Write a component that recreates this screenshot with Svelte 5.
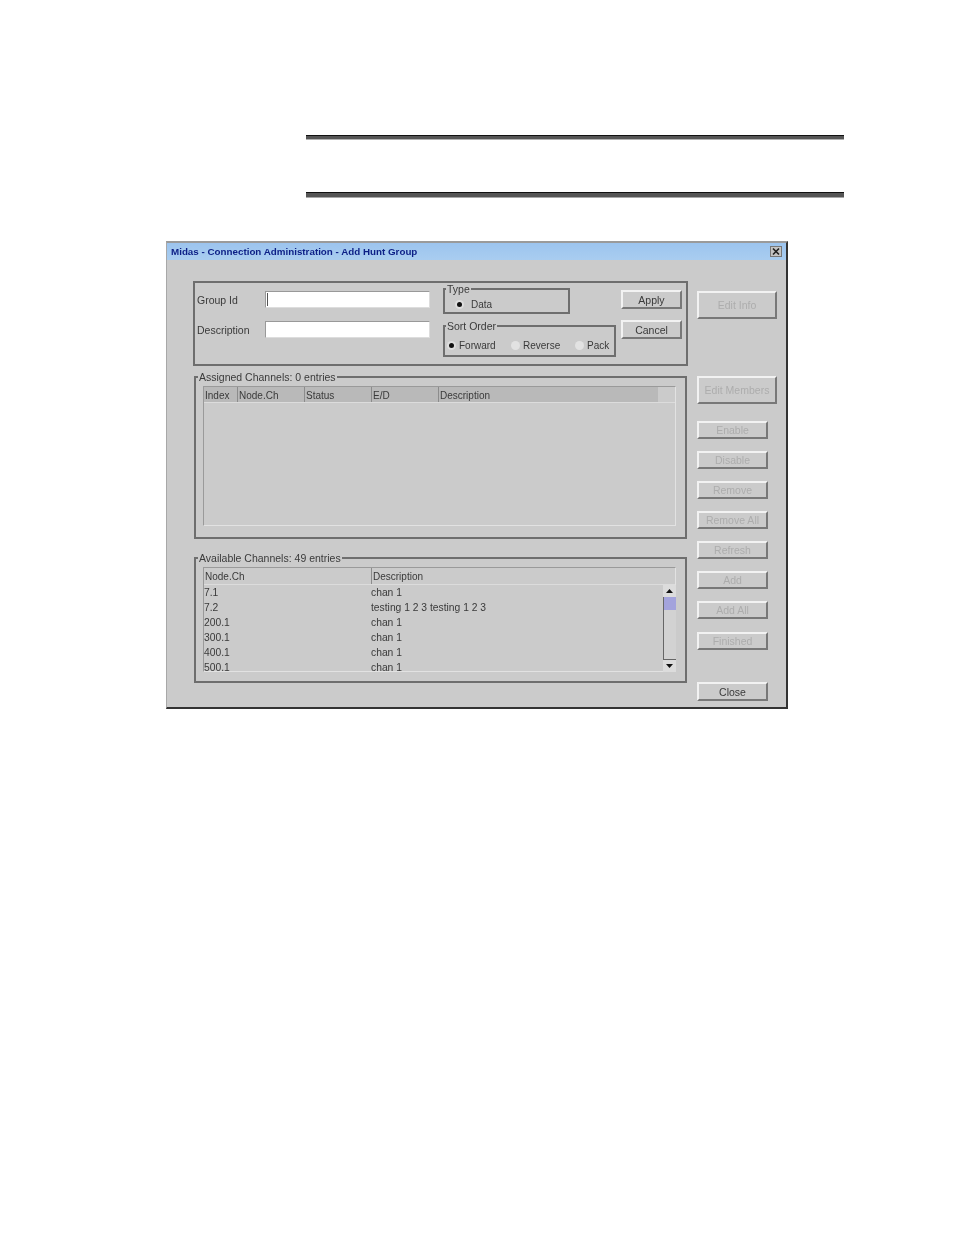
<script lang="ts">
  const assignedCols = [
    { name: "Index", width: 33 },
    { name: "Node.Ch", width: 67 },
    { name: "Status", width: 67 },
    { name: "E/D", width: 67 },
    { name: "Description", width: 221 },
  ];

  const channels = [
    { node: "7.1", desc: "chan 1" },
    { node: "7.2", desc: "testing 1 2 3 testing 1 2 3" },
    { node: "200.1", desc: "chan 1" },
    { node: "300.1", desc: "chan 1" },
    { node: "400.1", desc: "chan 1" },
    { node: "500.1", desc: "chan 1" },
  ];

  const actions = [
    { name: "Enable", top: 17 },
    { name: "Disable", top: 12 },
    { name: "Remove", top: 12 },
    { name: "Remove All", top: 12 },
    { name: "Refresh", top: 12 },
    { name: "Add", top: 12 },
    { name: "Add All", top: 12 },
    { name: "Finished", top: 13 },
  ];

  const sortOrders = [
    { name: "Forward", on: true },
    { name: "Reverse", on: false },
    { name: "Pack", on: false },
  ];
</script>

<div class="page">
  <div class="note">
    <div class="rule"></div>
    <div class="rule second"></div>
  </div>

  <div class="window">
    <div class="titlebar">
      <span>Midas - Connection Administration - Add Hunt Group</span>
      <svg class="close-x" width="12" height="11" viewBox="0 0 12 11">
        <rect x="0.5" y="0.5" width="11" height="10" fill="#c4c4c4" stroke="#777" />
        <path d="M3 2.5 L9 8.5 M9 2.5 L3 8.5" stroke="#222" stroke-width="1.7" />
      </svg>
    </div>

    <div class="body">
      <div class="main">
        <div class="top-panel">
          <div class="fields">
            <div class="field">
              <span class="field-label">Group Id</span>
              <div class="input"><i class="caret"></i></div>
            </div>
            <div class="field">
              <span class="field-label">Description</span>
              <div class="input"></div>
            </div>
          </div>

          <div class="options">
            <fieldset class="group type-group">
              <legend>Type</legend>
              <div class="radio-row type-row">
                <span class="radio on"></span>
                <span>Data</span>
              </div>
            </fieldset>
            <fieldset class="group sort-group">
              <legend>Sort Order</legend>
              <div class="radio-row">
                {#each sortOrders as opt}
                  <div class="radio-opt">
                    <span class="radio" class:on={opt.on}></span>
                    <span>{opt.name}</span>
                  </div>
                {/each}
              </div>
            </fieldset>
          </div>

          <div class="form-buttons">
            <div class="btn apply">Apply</div>
            <div class="btn cancel">Cancel</div>
          </div>
        </div>

        <fieldset class="group assigned">
          <legend>Assigned Channels: 0 entries</legend>
          <div class="table assigned-table">
            <div class="thead">
              {#each assignedCols as col}
                <div class="th" style="width: {col.width}px">{col.name}</div>
              {/each}
            </div>
          </div>
        </fieldset>

        <fieldset class="group available">
          <legend>Available Channels: 49 entries</legend>
          <div class="table available-table">
            <div class="thead light">
              <div class="th node-col">Node.Ch</div>
              <div class="th">Description</div>
            </div>
            <div class="list">
              <div class="rows">
                {#each channels as ch}
                  <div class="row">
                    <span class="node-col">{ch.node}</span>
                    <span>{ch.desc}</span>
                  </div>
                {/each}
              </div>
              <div class="scrollbar">
                <div class="arrow">
                  <svg width="9" height="6" viewBox="0 0 9 6"><path d="M4.5 1 L8 5 H1 Z" fill="#111" /></svg>
                </div>
                <div class="track"><div class="thumb"></div></div>
                <div class="arrow">
                  <svg width="9" height="6" viewBox="0 0 9 6"><path d="M1 1 H8 L4.5 5 Z" fill="#111" /></svg>
                </div>
              </div>
            </div>
          </div>
        </fieldset>
      </div>

      <div class="side">
        <div class="btn wide off edit-info">Edit Info</div>
        <div class="btn wide off edit-members">Edit Members</div>
        {#each actions as a}
          <div class="btn off action" style="margin-top: {a.top}px">{a.name}</div>
        {/each}
        <div class="btn close">Close</div>
      </div>
    </div>
  </div>
</div>

<style>
  :global(body) {
    margin: 0;
    background: #fff;
  }

  .page {
    height: 1235px;
    overflow: hidden;
    padding-top: 135px;
    box-sizing: border-box;
    font-family: "Liberation Sans", Arial, sans-serif;
    font-size: 10px;
    color: #3a3a3a;
  }

  .note {
    margin-left: 306px;
    width: 538px;
  }

  .rule {
    height: 5px;
    background: linear-gradient(#111 0 1px, #555 1px 4px, #b0b0b0 4px);
  }

  .rule.second {
    margin-top: 52px;
    height: 6px;
    background: linear-gradient(#111 0 1px, #555 1px 5px, #a8a8a8 5px);
  }

  .window {
    margin: 43px 0 0 166px;
    width: 622px;
    height: 468px;
    box-sizing: border-box;
    background: #cbcbcb;
    border-top: 2px solid #9a9a9a;
    border-left: 1px solid #a8a8a8;
    border-right: 2px solid #333;
    border-bottom: 2px solid #333;
    filter: blur(0.6px);
  }

  .titlebar {
    height: 17px;
    background: linear-gradient(#9cc4ee, #a9cdf0);
    display: flex;
    align-items: center;
    justify-content: space-between;
    padding: 0 4px 0 4px;
    font-weight: bold;
    font-size: 9.8px;
    color: #0c1f86;
  }

  .body {
    display: flex;
    padding: 21px 0 0 26px;
  }

  .main {
    width: 495px;
    flex: none;
  }

  .top-panel {
    display: flex;
    height: 85px;
    box-sizing: border-box;
    border: 2px solid #6e6e6e;
    padding: 8px 0 0 2px;
  }

  .fields {
    width: 235px;
    flex: none;
    display: flex;
    flex-direction: column;
    gap: 13px;
  }

  .field {
    display: flex;
    align-items: center;
    height: 17px;
  }

  .field-label {
    width: 68px;
    flex: none;
    font-size: 10.5px;
  }

  .input {
    width: 165px;
    height: 17px;
    box-sizing: border-box;
    background: #fff;
    border: 1px solid #999;
    border-bottom-color: #ddd;
    border-right-color: #ddd;
    display: flex;
    align-items: center;
    padding-left: 1px;
  }

  .caret {
    width: 1px;
    height: 13px;
    background: #555;
  }

  .options {
    margin-left: 11px;
    margin-top: -2px;
    width: 173px;
    flex: none;
    display: flex;
    flex-direction: column;
    gap: 12px;
  }

  .group {
    margin: 0;
    padding: 0;
    box-sizing: border-box;
    border: 2px solid #6e6e6e;
    min-width: 0;
  }

  .group legend {
    padding: 0 1px;
    margin-left: 1px;
    font-size: 10.5px;
    line-height: 12px;
  }

  .type-group {
    width: 127px;
    height: 31px;
    margin-top: -6px;
  }

  .sort-group {
    width: 173px;
    height: 37px;
    margin-top: -6px;
  }

  .radio-row {
    display: flex;
    align-items: center;
    height: 16px;
    padding-left: 2px;
    font-size: 10px;
  }

  .type-row {
    padding-left: 10px;
    gap: 7px;
    margin-top: 1px;
  }

  .sort-group .radio-row {
    margin-top: 5px;
  }

  .radio-opt {
    width: 64px;
    flex: none;
    display: flex;
    align-items: center;
    gap: 3px;
    white-space: nowrap;
  }

  .radio {
    width: 9px;
    height: 9px;
    flex: none;
    border-radius: 50%;
    background: #e2e2e2;
    position: relative;
  }

  .radio.on {
    background: #dedede;
  }

  .radio.on::after {
    content: "";
    position: absolute;
    left: 2px;
    top: 2px;
    width: 5px;
    height: 5px;
    border-radius: 50%;
    background: #111;
  }

  .form-buttons {
    margin-left: 5px;
    margin-top: -1px;
    display: flex;
    flex-direction: column;
    gap: 11px;
  }

  .btn {
    box-sizing: border-box;
    display: flex;
    align-items: center;
    justify-content: center;
    border: 2px solid;
    border-color: #f2f2f2 #787878 #787878 #f2f2f2;
    font-size: 10.5px;
    white-space: nowrap;
  }

  .apply,
  .cancel {
    width: 61px;
    height: 19px;
  }

  .off {
    color: #adadad;
  }

  .assigned {
    margin-top: 5px;
    margin-left: 1px;
    width: 493px;
    height: 168px;
    padding: 0 9px 0 7px;
  }

  .available {
    margin-top: 13px;
    margin-left: 1px;
    width: 493px;
    height: 131px;
    padding: 0 9px 0 7px;
  }

  .assigned legend,
  .available legend {
    margin-left: -5px;
  }

  .table {
    box-sizing: border-box;
    border: 1px solid #9a9a9a;
    border-right-color: #e2e2e2;
    border-bottom-color: #e2e2e2;
  }

  .assigned-table {
    height: 140px;
    margin-top: 3px;
  }

  .available-table {
    height: 105px;
    margin-top: 3px;
  }

  .thead {
    display: flex;
    height: 15px;
    background: linear-gradient(90deg, #b9b9b9 454px, #cbcbcb 454px);
    border-bottom: 1px solid #dcdcdc;
  }

  .thead.light {
    background: #cbcbcb;
    height: 16px;
  }

  .th {
    box-sizing: border-box;
    padding-left: 1px;
    line-height: 17px;
    border-left: 1px solid #8c8c8c;
  }

  .th:first-child {
    border-left: none;
  }

  .node-col {
    width: 167px;
    flex: none;
  }

  .list {
    display: flex;
    height: 87px;
  }

  .rows {
    flex: 1;
  }

  .row {
    display: flex;
    height: 15px;
    line-height: 15px;
    font-size: 10.3px;
  }

  .scrollbar {
    width: 13px;
    height: 87px;
    margin-right: -1px;
    display: flex;
    flex-direction: column;
    box-sizing: border-box;
  }

  .arrow {
    height: 12px;
    flex: none;
    display: flex;
    align-items: center;
    justify-content: center;
    background: #dcdcdc;
  }

  .track {
    flex: 1;
    background: #d2d2d2;
    border-left: 1px solid #666;
    border-bottom: 1px solid #666;
  }

  .thumb {
    height: 13px;
    background: #a3a3dc;
  }

  .side {
    margin-left: 9px;
    display: flex;
    flex-direction: column;
    align-items: flex-start;
  }

  .wide {
    width: 80px;
    height: 28px;
  }

  .edit-info {
    margin-top: 10px;
  }

  .edit-members {
    margin-top: 57px;
  }

  .action {
    width: 71px;
    height: 18px;
  }

  .close {
    width: 71px;
    height: 19px;
    margin-top: 32px;
  }
</style>
